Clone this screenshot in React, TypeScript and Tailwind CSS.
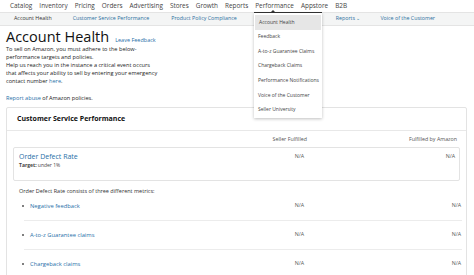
import React from "react";

const font = { fontFamily: '"Open Sans", "Noto Sans", sans-serif' };

const navItems = ["Catalog", "Inventory", "Pricing", "Orders", "Advertising", "Stores", "Growth", "Reports", "Performance", "Appstore", "B2B"];
const dropItems = ["Account Health", "Feedback", "A-to-z Guarantee Claims", "Chargeback Claims", "Performance Notifications", "Voice of the Customer", "Seller University"];

function MetricRow({ label, last }: { label: string; last?: boolean }) {
  return (
    <div className={`flex items-center h-[28.8px] ml-[17px] mr-[4px] ${last ? "" : "border-b border-[#ececec]"}`}>
      <div className="flex items-center w-[256px] -ml-[2px]">
        <span className="w-[2px] h-[2px] rounded-full bg-[#555] mr-[6px]" />
        <span className="text-[#1f6fa8] text-[5.8px]">{label}</span>
      </div>
      <div className="w-[26px] text-right text-[5.3px] text-[#555]">N/A</div>
      <div className="flex-1 text-right text-[5.3px] text-[#555] pr-[1px]">N/A</div>
    </div>
  );
}

export default function App() {
  return (
    <div className="w-[474px] h-[275px] bg-white overflow-hidden relative" style={font}>
      {/* top nav */}
      <div className="h-[12px] flex items-center pl-[10px] gap-[7px] text-[6.4px] text-[#444] bg-white">
        {navItems.map((n) => (
          <span key={n} className="leading-none">{n}</span>
        ))}
      </div>
      {/* sub nav */}
      <div className="h-[14px] flex items-center bg-[#f4f5f5] border-t border-b border-[#e4e4e4] text-[5.3px] text-[#555]">
        <span className="ml-[14px] text-[#333]">Account Health</span>
        <span className="ml-[21px] text-[#2b6f9e]">Customer Service Performance</span>
        <span className="ml-[22px] text-[#2b6f9e]">Product Policy Compliance</span>
        <span className="ml-[99px] text-[#2b6f9e]">Reports ⌄</span>
        <span className="ml-[20px] text-[#2b6f9e]">Voice of the Customer</span>
      </div>

      {/* header */}
      <div className="pl-[6px] pt-[3px]">
        <div className="flex items-baseline">
          <span className="text-[14.5px] text-[#111] leading-[16px]">Account Health</span>
          <span className="ml-[6px] text-[5.5px] text-[#1f6fa8]">Leave Feedback</span>
        </div>
        <div className="text-[5.6px] text-[#222] leading-[8px] w-[160px]">
          <div>To sell on Amazon, you must adhere to the below-</div>
          <div>performance targets and policies.</div>
          <div>Help us reach you in the instance a critical event occurs</div>
          <div>that affects your ability to sell by entering your emergency</div>
          <div>
            contact number <span className="text-[#1f6fa8]">here</span>.
          </div>
          <div className="mt-[9px]">
            <span className="text-[#1f6fa8]">Report abuse</span> of Amazon policies.
          </div>
        </div>
      </div>

      {/* card */}
      <div className="ml-[6px] mr-[7px] mt-[5px] border border-[#e3e3e3] rounded-[2px]">
        <div className="h-[23px] flex items-center pl-[10px] border-b border-[#e8e8e8] text-[7px] font-bold text-[#111]">
          Customer Service Performance
        </div>
        <div className="flex h-[13px] items-end text-[5.3px] text-[#555] pr-[9px]">
          <div className="w-[300px] text-right">Seller Fulfilled</div>
          <div className="flex-1 text-right">Fulfilled by Amazon</div>
        </div>
        <div className="mx-[6px] mt-[3px] h-[34px] border border-[#e3e3e3] rounded-[2px] flex pt-[4px]">
          <div className="w-[260px] pl-[5px]">
            <div className="text-[7px] text-[#1f6fa8] leading-[9px]">Order Defect Rate</div>
            <div className="text-[5px] text-[#444] leading-[8px]">
              <span className="font-bold">Target:</span> under 1%
            </div>
          </div>
          <div className="w-[30px] text-right text-[5.3px] text-[#555] pt-[1px]">N/A</div>
          <div className="flex-1 text-right text-[5.3px] text-[#555] pr-[4px] pt-[1px]">N/A</div>
        </div>
        <div className="pl-[12px] mt-[6px] text-[5.5px] text-[#333]">Order Defect Rate consists of three different metrics:</div>
        <div className="-mt-[3px]">
          <MetricRow label="Negative feedback" />
          <MetricRow label="A-to-z Guarantee claims" />
          <MetricRow label="Chargeback claims" last />
        </div>
      </div>

      {/* dropdown */}
      <div className="absolute left-[254px] top-[12px] w-[68px] h-[1px] bg-[#333]" />
      <div className="absolute left-[271px] top-[10px] w-0 h-0 border-l-[2px] border-r-[2px] border-b-[2px] border-l-transparent border-r-transparent border-b-[#333]" />
      <div className="absolute left-[254px] top-[13px] w-[68px] bg-white shadow-[0_1px_3px_rgba(0,0,0,0.25)] pt-[2px] pb-[1px] text-[5px] text-[#444]">
        {dropItems.map((d, i) => (
          <div key={d} className={`h-[14.6px] flex items-center pl-[4px] ${i === 0 ? "bg-[#e6e6e6] mx-[1px] pl-[3px]" : ""}`}>
            {d}
          </div>
        ))}
      </div>
    </div>
  );
}
